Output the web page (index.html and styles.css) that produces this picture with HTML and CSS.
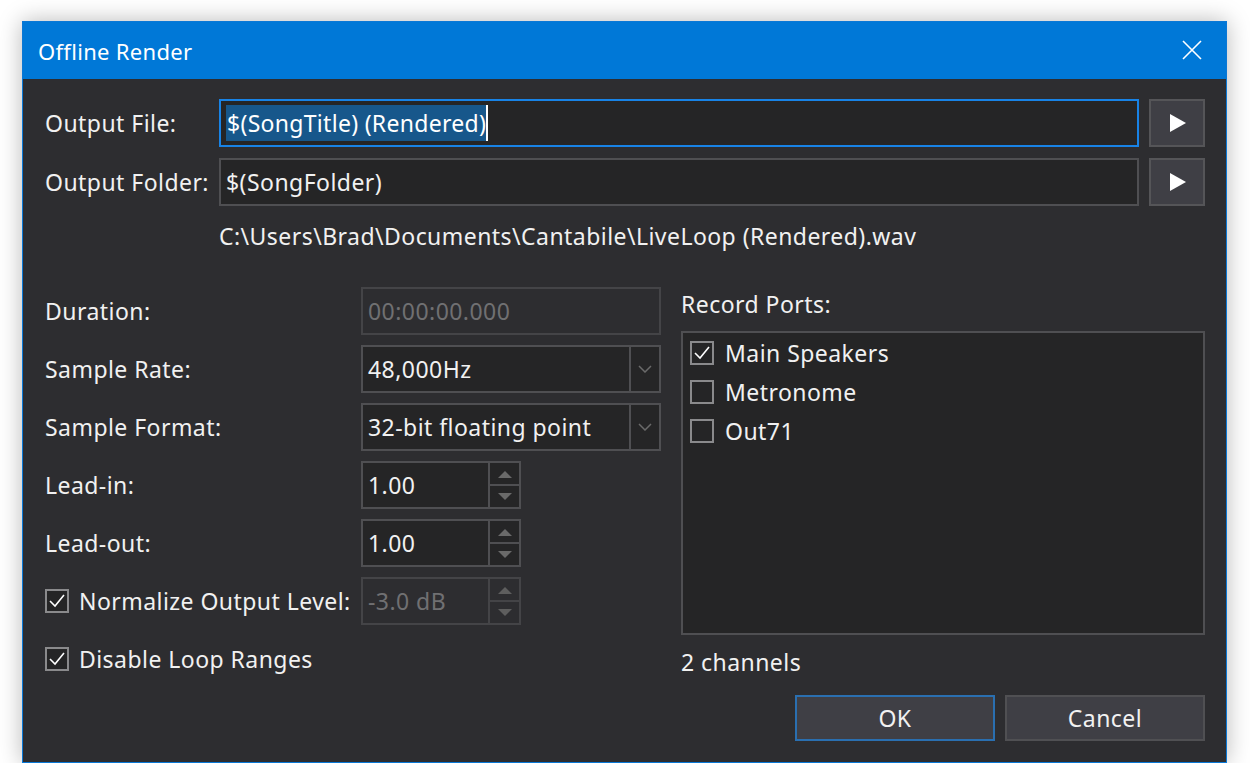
FILE: index.html
```html
<!DOCTYPE html>
<html>
<head>
<meta charset="utf-8">
<title>Offline Render</title>
<link rel="stylesheet" href="styles.css">
</head>
<body>
<div class="window">
  <div class="titlebar">
    <span class="title">Offline Render</span>
    <span class="close">
      <svg width="20" height="20" viewBox="0 0 20 20"><path d="M1 1 L19 19 M19 1 L1 19" stroke="#fff" stroke-width="1.6" fill="none"/></svg>
    </span>
  </div>
  <div class="content">
    <div class="file-row">
      <span class="label">Output File:</span>
      <div class="textbox focused"><span class="sel">$(SongTitle) (Rendered)</span><span class="caret"></span></div>
      <button class="play"><svg width="18" height="18" viewBox="0 0 18 18"><path d="M1 0 L17 9 L1 18 Z" fill="#fff"/></svg></button>
    </div>
    <div class="file-row second">
      <span class="label">Output Folder:</span>
      <div class="textbox">$(SongFolder)</div>
      <button class="play"><svg width="18" height="18" viewBox="0 0 18 18"><path d="M1 0 L17 9 L1 18 Z" fill="#fff"/></svg></button>
    </div>
    <div class="path">C:\Users\Brad\Documents\Cantabile\LiveLoop (Rendered).wav</div>

    <div class="lower">
      <div class="left">
        <div class="row">
          <span class="label2">Duration:</span>
          <div class="textbox wide disabled">00:00:00.000</div>
        </div>
        <div class="row">
          <span class="label2">Sample Rate:</span>
          <div class="combo">
            <span class="combo-text">48,000Hz</span>
            <span class="combo-btn"><svg width="14" height="8" viewBox="0 0 14 8"><path d="M1 1 L7 7 L13 1" stroke="#6a6a6a" stroke-width="1.5" fill="none"/></svg></span>
          </div>
        </div>
        <div class="row">
          <span class="label2">Sample Format:</span>
          <div class="combo">
            <span class="combo-text">32-bit floating point</span>
            <span class="combo-btn"><svg width="14" height="8" viewBox="0 0 14 8"><path d="M1 1 L7 7 L13 1" stroke="#6a6a6a" stroke-width="1.5" fill="none"/></svg></span>
          </div>
        </div>
        <div class="row">
          <span class="label2">Lead-in:</span>
          <div class="spin">
            <span class="spin-text">1.00</span>
            <span class="spin-btns">
              <span class="sb"><svg width="14" height="8" viewBox="0 0 14 8"><path d="M0 8 L7 1 L14 8 Z" fill="#6a6a6a"/></svg></span>
              <span class="sb down"><svg width="14" height="8" viewBox="0 0 14 8"><path d="M0 0 L7 7 L14 0 Z" fill="#6a6a6a"/></svg></span>
            </span>
          </div>
        </div>
        <div class="row">
          <span class="label2">Lead-out:</span>
          <div class="spin">
            <span class="spin-text">1.00</span>
            <span class="spin-btns">
              <span class="sb"><svg width="14" height="8" viewBox="0 0 14 8"><path d="M0 8 L7 1 L14 8 Z" fill="#6a6a6a"/></svg></span>
              <span class="sb down"><svg width="14" height="8" viewBox="0 0 14 8"><path d="M0 0 L7 7 L14 0 Z" fill="#6a6a6a"/></svg></span>
            </span>
          </div>
        </div>
        <div class="row">
          <span class="label2 check-label">
            <span class="checkbox"><svg width="20" height="20" viewBox="0 0 20 20"><path d="M3 10 L8 15 L17 4" stroke="#fff" stroke-width="1.6" fill="none"/></svg></span>
            Normalize Output Level:
          </span>
          <div class="spin disabled">
            <span class="spin-text">-3.0 dB</span>
            <span class="spin-btns">
              <span class="sb"><svg width="14" height="8" viewBox="0 0 14 8"><path d="M0 8 L7 1 L14 8 Z" fill="#5e5e5e"/></svg></span>
              <span class="sb down"><svg width="14" height="8" viewBox="0 0 14 8"><path d="M0 0 L7 7 L14 0 Z" fill="#5e5e5e"/></svg></span>
            </span>
          </div>
        </div>
        <div class="row">
          <span class="label2 check-label">
            <span class="checkbox"><svg width="20" height="20" viewBox="0 0 20 20"><path d="M3 10 L8 15 L17 4" stroke="#fff" stroke-width="1.6" fill="none"/></svg></span>
            Disable Loop Ranges
          </span>
        </div>
      </div>

      <div class="right">
        <div class="ports-label">Record Ports:</div>
        <div class="listbox">
          <div class="item">
            <span class="checkbox"><svg width="20" height="20" viewBox="0 0 20 20"><path d="M3 10 L8 15 L17 4" stroke="#fff" stroke-width="1.6" fill="none"/></svg></span>
            Main Speakers
          </div>
          <div class="item"><span class="checkbox"></span>Metronome</div>
          <div class="item"><span class="checkbox"></span>Out71</div>
        </div>
        <div class="channels">2 channels</div>
        <div class="buttons">
          <button class="btn default">OK</button>
          <button class="btn">Cancel</button>
        </div>
      </div>
    </div>
  </div>
</div>
</body>
</html>
```

FILE: styles.css
```css
* { box-sizing: border-box; }

html, body {
  margin: 0;
  padding: 0;
  background: #ffffff;
}

body {
  padding: 21px 0 0 22px;
  font-family: "Noto Sans", "Open Sans", sans-serif;
  font-size: 23px;
  letter-spacing: 0.45px;
  color: #f1f1f1;
}

.window {
  width: 1205px;
  height: 742px;
  border: 1px solid #0a78d6;
  background: #2d2d30;
  box-shadow: 0 0 22px rgba(0, 0, 0, 0.28);
  display: flex;
  flex-direction: column;
}

.titlebar {
  height: 57px;
  background: #0078d7;
  display: flex;
  align-items: center;
  justify-content: space-between;
  padding: 0 24px 0 15px;
  flex-shrink: 0;
}

.title {
  font-size: 22px;
  letter-spacing: 0.3px;
  color: #ffffff;
}

.close {
  display: flex;
  align-items: center;
  margin-top: -2px;
}

.content {
  padding: 20px 21px 21px 22px;
  display: flex;
  flex-direction: column;
}

.file-row {
  display: flex;
  align-items: center;
  height: 48px;
}

.file-row.second {
  margin-top: 11px;
}

.label {
  width: 174px;
  flex-shrink: 0;
  white-space: nowrap;
}

.textbox {
  height: 48px;
  border: 2px solid #4f4f52;
  background: #252526;
  display: flex;
  align-items: center;
  padding-left: 5px;
  white-space: nowrap;
}

.file-row .textbox {
  width: 920px;
}

.textbox.focused {
  border-color: #1883e6;
}

.sel {
  background: #17578b;
  color: #ffffff;
  line-height: 36px;
  padding-left: 1px;
  letter-spacing: 0.3px;
}

.caret {
  display: inline-block;
  width: 2px;
  height: 36px;
  background: #ffffff;
}

.play {
  width: 56px;
  height: 48px;
  margin-left: 10px;
  border: 2px solid #555558;
  background: #3f3f45;
  display: flex;
  align-items: center;
  justify-content: center;
  padding: 0 0 0 2px;
}

.path {
  margin: 15px 0 0 174px;
  height: 30px;
  line-height: 30px;
  white-space: nowrap;
}

.lower {
  margin-top: 36px;
  display: flex;
  gap: 20px;
}

.left {
  width: 616px;
  display: flex;
  flex-direction: column;
  gap: 10px;
}

.row {
  height: 48px;
  display: flex;
  align-items: center;
}

.label2 {
  width: 316px;
  flex-shrink: 0;
  white-space: nowrap;
}

.check-label {
  display: flex;
  align-items: center;
  gap: 10px;
}

.textbox.wide {
  width: 300px;
}

.disabled {
  color: #707072;
}

.textbox.disabled {
  background: #2d2d30;
  border-color: #444447;
}

.combo {
  width: 300px;
  height: 48px;
  border: 2px solid #4f4f52;
  background: #252526;
  display: flex;
}

.combo-text {
  flex: 1;
  display: flex;
  align-items: center;
  padding-left: 5px;
  border-right: 2px solid #4f4f52;
  white-space: nowrap;
}

.combo-btn {
  width: 28px;
  display: flex;
  align-items: center;
  justify-content: center;
}

.spin {
  width: 160px;
  height: 48px;
  border: 2px solid #4f4f52;
  background: #252526;
  display: flex;
}

.spin.disabled {
  background: #2d2d30;
  border-color: #444447;
}

.spin-text {
  flex: 1;
  display: flex;
  align-items: center;
  padding-left: 5px;
  border-right: 2px solid #4f4f52;
  white-space: nowrap;
}

.spin.disabled .spin-text {
  border-color: #444447;
}

.spin-btns {
  width: 29px;
  display: flex;
  flex-direction: column;
}

.sb {
  flex: 1;
  display: flex;
  align-items: center;
  justify-content: center;
}

.sb.down {
  border-top: 2px solid #4f4f52;
}

.spin.disabled .sb.down {
  border-color: #444447;
}

.checkbox {
  width: 24px;
  height: 24px;
  border: 2px solid #8a8a8c;
  background: #252526;
  display: inline-flex;
  align-items: center;
  justify-content: center;
  flex-shrink: 0;
}

.right {
  width: 524px;
  display: flex;
  flex-direction: column;
}

.ports-label {
  height: 34px;
  line-height: 34px;
}

.listbox {
  margin-top: 10px;
  height: 304px;
  border: 2px solid #4f4f52;
  background: #252526;
  padding: 0 0 0 7px;
}

.item {
  height: 39px;
  display: flex;
  align-items: center;
  gap: 11px;
  white-space: nowrap;
}

.channels {
  margin-top: 12px;
  height: 30px;
  line-height: 30px;
}

.buttons {
  margin-top: 18px;
  display: flex;
  justify-content: flex-end;
  gap: 10px;
}

.btn {
  width: 200px;
  height: 46px;
  border: 2px solid #505053;
  background: #3f3f45;
  color: #f1f1f1;
  font-family: "Noto Sans", "Open Sans", sans-serif;
  font-size: 23px;
  letter-spacing: 0.45px;
  padding: 0;
}

.btn.default {
  border-color: #2a6fb0;
}
```
